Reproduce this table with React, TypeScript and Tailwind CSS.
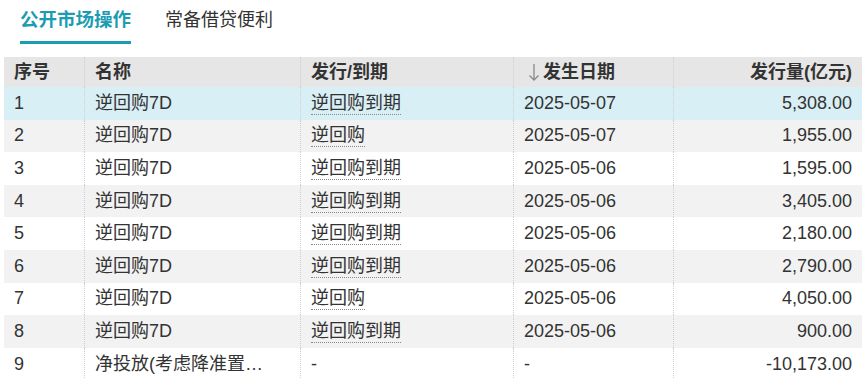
import React from "react";

interface Row {
  no: number;
  name: string;
  kind: string;
  date: string;
  amount: string;
}

const rows: Row[] = [
  { no: 1, name: "逆回购7D", kind: "逆回购到期", date: "2025-05-07", amount: "5,308.00" },
  { no: 2, name: "逆回购7D", kind: "逆回购", date: "2025-05-07", amount: "1,955.00" },
  { no: 3, name: "逆回购7D", kind: "逆回购到期", date: "2025-05-06", amount: "1,595.00" },
  { no: 4, name: "逆回购7D", kind: "逆回购到期", date: "2025-05-06", amount: "3,405.00" },
  { no: 5, name: "逆回购7D", kind: "逆回购到期", date: "2025-05-06", amount: "2,180.00" },
  { no: 6, name: "逆回购7D", kind: "逆回购到期", date: "2025-05-06", amount: "2,790.00" },
  { no: 7, name: "逆回购7D", kind: "逆回购", date: "2025-05-06", amount: "4,050.00" },
  { no: 8, name: "逆回购7D", kind: "逆回购到期", date: "2025-05-06", amount: "900.00" },
  { no: 9, name: "净投放(考虑降准置换)", kind: "-", date: "-", amount: "-10,173.00" },
];

const cols = "grid grid-cols-[80px_216px_213px_160px_1fr]";
const sep = "border-l border-dotted border-[#cfcfcf]";

export default function App() {
  return (
    <div
      className="w-[865px] h-[379px] overflow-hidden bg-white text-[#333]"
      style={{ fontFamily: '"Liberation Sans", "Noto Sans CJK SC", sans-serif' }}
    >
      <div className="flex items-end gap-[34px] pl-[20px] pt-[8px] h-[44px]">
        <div className="flex flex-col h-full justify-between">
          <span className="text-[18.5px] leading-[24px] font-bold text-[#1c9cb2]">
            公开市场操作
          </span>
          <div className="h-[3px] bg-[#1c9cb2]" />
        </div>
        <div className="flex flex-col h-full">
          <span className="text-[18px] leading-[24px] text-[#333]">常备借贷便利</span>
        </div>
      </div>

      <div className="ml-[4px] mr-[3px] mt-[13px] text-[18px]">
        <div className={`${cols} h-[30px] bg-[#e6e6e6] font-bold items-center`}>
          <div className="px-[10px]">序号</div>
          <div className={`px-[10px] h-full flex items-center ${sep}`}>名称</div>
          <div className={`px-[10px] h-full flex items-center ${sep}`}>发行/到期</div>
          <div className={`px-[10px] h-full flex items-center gap-[3px] ${sep}`}>
            <svg width="12" height="18" viewBox="0 0 12 18" className="ml-[4px]">
              <path d="M6 1v16M1.5 12.5L6 17l4.5-4.5" fill="none" stroke="#8a8a8a" strokeWidth="1.3" />
            </svg>
            发生日期
          </div>
          <div className={`px-[10px] h-full flex items-center justify-end ${sep}`}>发行量(亿元)</div>
        </div>
        {rows.map((r, i) => (
          <div
            key={r.no}
            className={`${cols} h-[32.6px] ${
              i === 0 ? "bg-[#d9eff6]" : i % 2 === 1 ? "bg-[#f2f2f2]" : "bg-white"
            }`}
          >
            <div className="px-[10px] flex items-center">{r.no}</div>
            <div className={`px-[10px] flex items-center min-w-0 ${sep}`}>
              <span className="block w-[170px] overflow-hidden text-ellipsis whitespace-nowrap">
                {r.name}
              </span>
            </div>
            <div className={`px-[10px] flex items-center ${sep}`}>
              {r.kind === "-" ? (
                <span>-</span>
              ) : (
                <span className="border-b border-dotted border-[#888] leading-[22px]">{r.kind}</span>
              )}
            </div>
            <div className={`px-[10px] flex items-center ${sep}`}>{r.date}</div>
            <div className={`px-[10px] flex items-center justify-end ${sep}`}>{r.amount}</div>
          </div>
        ))}
      </div>
    </div>
  );
}
